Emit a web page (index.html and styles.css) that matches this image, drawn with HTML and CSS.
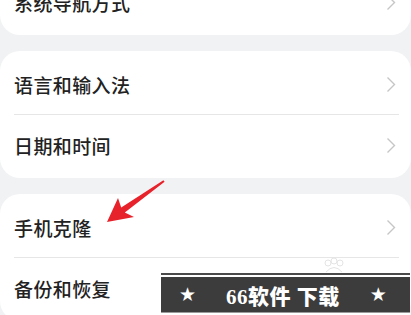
FILE: index.html
```html
<!DOCTYPE html>
<html lang="zh">
<head>
<meta charset="utf-8">
<link rel="stylesheet" href="styles.css">
</head>
<body>
<div class="page">
  <div class="list">
    <div class="card">
      <div class="row"><span class="label">系统导航方式</span><svg class="chev" viewBox="0 0 10 17" width="10" height="17"><polyline points="1.5,1.5 8.5,8.5 1.5,15.5"/></svg></div>
    </div>
    <div class="card">
      <div class="row"><span class="label">语言和输入法</span><svg class="chev" viewBox="0 0 10 17" width="10" height="17"><polyline points="1.5,1.5 8.5,8.5 1.5,15.5"/></svg></div>
      <div class="row"><span class="label">日期和时间</span><svg class="chev" viewBox="0 0 10 17" width="10" height="17"><polyline points="1.5,1.5 8.5,8.5 1.5,15.5"/></svg></div>
    </div>
    <div class="card">
      <div class="row"><span class="label">手机克隆</span><svg class="chev" viewBox="0 0 10 17" width="10" height="17"><polyline points="1.5,1.5 8.5,8.5 1.5,15.5"/></svg></div>
      <div class="row"><span class="label">备份和恢复</span><svg class="chev" viewBox="0 0 10 17" width="10" height="17"><polyline points="1.5,1.5 8.5,8.5 1.5,15.5"/></svg></div>
    </div>
  </div>

  <svg class="arrow" viewBox="0 0 411 315" width="411" height="315">
    <polygon points="107,222 118,198 121.2,207.6 163.4,180.2 164.6,181.8 124.8,212.4 134,217"/>
  </svg>

  <svg class="paw" viewBox="0 0 24 16" width="24" height="16">
    <circle cx="6" cy="6" r="3"/><circle cx="12" cy="4" r="3"/><circle cx="18" cy="6" r="3"/><path d="M4 15 Q12 6 20 15"/>
  </svg>

  <div class="banner">
    <div class="banner-bar">
      <span class="star">★</span>
      <span class="banner-text">66软件 下载</span>
      <span class="star">★</span>
    </div>
  </div>
</div>
</body>
</html>
```

FILE: styles.css
```css
* { box-sizing: border-box; }
html, body {
  margin: 0;
  padding: 0;
  width: 411px;
  height: 315px;
  overflow: hidden;
  background: #f1f2f4;
}
.page {
  position: relative;
  width: 411px;
  height: 315px;
  overflow: hidden;
  font-family: "Noto Sans CJK SC", "Noto Sans", sans-serif;
}
.list {
  display: flex;
  flex-direction: column;
  gap: 16px;
  margin-top: -31px;
}
.card {
  background: #ffffff;
  border-radius: 20px;
  padding: 3px 0;
}
.row {
  height: 60px;
  margin: 0 12px 0 14px;
  display: flex;
  align-items: center;
  justify-content: space-between;
}
.row + .row {
  border-top: 1px solid #e6e6e6;
  height: 61px;
}
.label {
  font-size: 19px;
  font-weight: 500;
  color: #222222;
  letter-spacing: 0.4px;
}
.chev {
  fill: none;
  stroke: #c6c6c6;
  stroke-width: 1.4;
  margin-right: 3px;
}
.arrow {
  position: absolute;
  left: 0;
  top: 0;
  pointer-events: none;
}
.arrow polygon { fill: #e8222b; }
.paw {
  position: absolute;
  left: 322px;
  top: 257px;
  fill: none;
  stroke: #e4e4e4;
  stroke-width: 1;
}
.banner {
  position: absolute;
  left: 161px;
  top: 273px;
  width: 249px;
  height: 42px;
  border-top: 2px solid #4a4a4a;
  background: #ffffff;
  padding-top: 2px;
}
.banner-bar {
  height: 36px;
  background: #3c3c3c;
  display: flex;
  align-items: center;
  padding-left: 18px;
  border-bottom: 1px solid #9a9a9a;
}
.star {
  color: #ffffff;
  font-size: 19px;
  line-height: 1;
  font-family: "DejaVu Sans", sans-serif;
}
.banner-text {
  color: #ffffff;
  font-family: "Liberation Serif", "Noto Sans CJK SC", serif;
  font-weight: 900;
  font-size: 21px;
  margin: 0 30px 0 30px;
  letter-spacing: 0.5px;
}
```
